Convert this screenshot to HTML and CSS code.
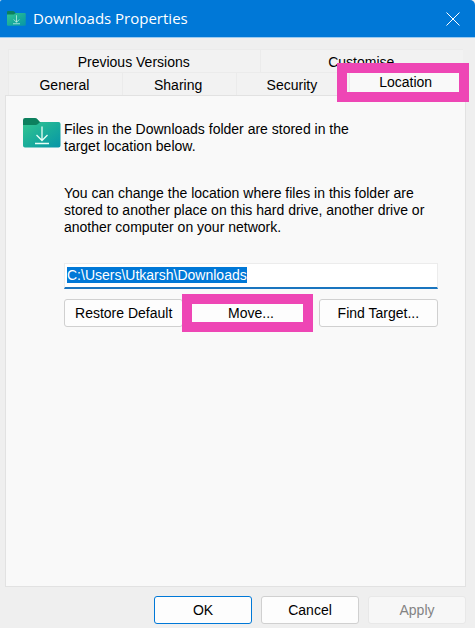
FILE: index.html
```
<!DOCTYPE html>
<html lang="en">
<head>
  <meta charset="UTF-8" />
  <meta name="viewport" content="width=device-width, initial-scale=1.0" />
  <title>Downloads Properties</title>
  <link rel="stylesheet" href="styles.css">
</head>
<body>
  <div class="dialog">
    <header class="titlebar">
      <svg class="title-icon" viewBox="0 0 38 30" aria-hidden="true">
        <use href="#folder" />
      </svg>
      <h1>Downloads Properties</h1>
      <button class="close" type="button" aria-label="Close">
        <svg viewBox="0 0 14 14" aria-hidden="true">
          <path d="M0.5 0.5 13.5 13.5M13.5 0.5 0.5 13.5" />
        </svg>
      </button>
    </header>

    <main class="content">
      <div class="tabs" role="tablist">
        <div class="tab-row">
          <button class="tab wide" type="button" role="tab">Previous Versions</button>
          <button class="tab" type="button" role="tab">Customise</button>
        </div>
        <div class="tab-row">
          <button class="tab" type="button" role="tab">General</button>
          <button class="tab" type="button" role="tab">Sharing</button>
          <button class="tab" type="button" role="tab">Security</button>
          <button class="tab active" type="button" role="tab" aria-selected="true">Location<span class="marker"></span></button>
        </div>
      </div>

      <section class="panel">
        <svg class="folder" viewBox="0 0 38 30" aria-hidden="true">
          <defs>
            <linearGradient id="front" x1="0" y1="0" x2="1" y2="1">
              <stop offset="0" stop-color="#35c691" />
              <stop offset="0.55" stop-color="#18ab9b" />
              <stop offset="1" stop-color="#0795a8" />
            </linearGradient>
          </defs>
          <g id="folder">
            <path d="M0 2Q0 0 2 0H12Q13.500 0 14.500 1.200L17 4H35V12H0Z" fill="#0d805e" />
            <path d="M0 7H12.500Q14 7 15 6L16 5Q17 4 18.500 4H35.500Q37.500 4 37.500 6V27.500Q37.500 29.500 35.500 29.500H2Q0 29.500 0 27.500Z" fill="url(#front)" />
            <path d="M19 8.500V22.500M13.500 17 19 22.500 24.500 17M12 25.500H26" fill="none" stroke="#e8fff6" stroke-width="1.300" />
          </g>
        </svg>
        <div class="details">
          <p>Files in the Downloads folder are stored in the target location below.</p>
          <p class="hint"><label for="path">You can change the location where files in this folder are stored to another place on this hard drive, another drive or another computer on your network.</label></p>
          <input id="path" class="path" type="text" value="C:\Users\Utkarsh\Downloads" spellcheck="false" autofocus />
          <div class="actions">
            <button class="btn" type="button">Restore Default</button>
            <button class="btn" type="button">Move...<span class="marker"></span></button>
            <button class="btn" type="button">Find Target...</button>
          </div>
        </div>
      </section>
    </main>

    <footer class="footer">
      <button class="btn default" type="button">OK</button>
      <button class="btn" type="button">Cancel</button>
      <button class="btn" type="button" disabled>Apply</button>
    </footer>
  </div>

  <script>
    const path = document.getElementById("path");
    path.focus();
    path.select();
  </script>
</body>
</html>
```
FILE: styles.css
```
* {
  box-sizing: border-box;
}
body {
  margin: 0;
  background: #efefef;
  color: #000;
  font-family: "Liberation Sans", Arial, sans-serif;
  font-size: 14px;
  line-height: 17px;
}
button,
input {
  font: inherit;
  color: inherit;
}
.dialog {
  display: flex;
  flex-direction: column;
  min-height: 100vh;
}
.titlebar {
  display: flex;
  align-items: center;
  height: 38px;
  padding: 0 15px 0 7px;
  background: #0078d7;
  border-bottom: 1px solid #9ccbf0;
  border-radius: 2px 5px 0 0;
  color: #fff;
}
.title-icon {
  width: 19px;
  height: 15px;
}
.titlebar h1 {
  flex: 1;
  margin: 0 0 0 7px;
  font-family: "Open Sans", sans-serif;
  font-size: 15px;
  font-weight: 400;
}
.close {
  display: flex;
  padding: 0;
  background: none;
  border: none;
}
.close svg {
  width: 14px;
  height: 14px;
  fill: none;
  stroke: #fff;
}
.content {
  flex: 1;
  display: flex;
  flex-direction: column;
  padding: 11px 9px 0 5px;
}
.tabs {
  padding: 0 3px;
}
.tab-row {
  display: flex;
}
.tab {
  flex: 4;
  height: 23px;
  padding: 2px 2px 0 0;
  background: #f2f2f2;
  border: 1px solid #ebebeb;
  border-width: 1px 0 0 1px;
}
.tab.wide {
  flex: 5;
}
.tab.active {
  position: relative;
  height: 25px;
  margin: -2px 0 0;
  padding: 0 2px 2px 0;
  background: #f9f9f9;
}
.marker {
  position: absolute;
  inset: -8px -6px -7px -13px;
  border: 10px solid #ee46b5;
  pointer-events: none;
}
.panel {
  flex: 1;
  display: flex;
  align-items: flex-start;
  gap: 3px;
  padding: 22px 27px 20px 17px;
  background: #f9f9f9;
  border: 1px solid #e2e2e2;
}
.folder {
  flex: none;
  width: 38px;
  height: 30px;
}
.details {
  flex: 1;
  min-width: 0;
  padding-top: 3px;
}
.details p {
  max-width: 376px;
  margin: 0;
}
.details p:first-child {
  max-width: 320px;
}
.details .hint {
  margin: 30px 0 27px;
}
.path {
  display: block;
  width: 100%;
  height: 26px;
  padding: 0 2px 2px;
  background: #fff;
  border: 1px solid #ececec;
  border-bottom: 2px solid #1a75bf;
  outline: none;
}
.path::selection {
  background: #0078d7;
  color: #fff;
}
.actions {
  display: grid;
  grid-template-columns: repeat(3, 1fr);
  gap: 8px;
  margin-top: 10px;
}
.btn {
  position: relative;
  height: 28px;
  padding: 0;
  background: #fdfdfd;
  border: 1px solid #d0d0d0;
  border-radius: 3px;
}
.actions .marker {
  inset: -6px -3px -6px -10px;
}
.footer {
  display: flex;
  justify-content: flex-end;
  gap: 9px;
  padding: 9px 9px 4px;
}
.footer .btn {
  width: 98px;
}
.btn.default {
  border-color: #0078d7;
}
.btn:disabled {
  background: #f7f7f7;
  border-color: #e8e8e8;
  color: #838383;
}
```
